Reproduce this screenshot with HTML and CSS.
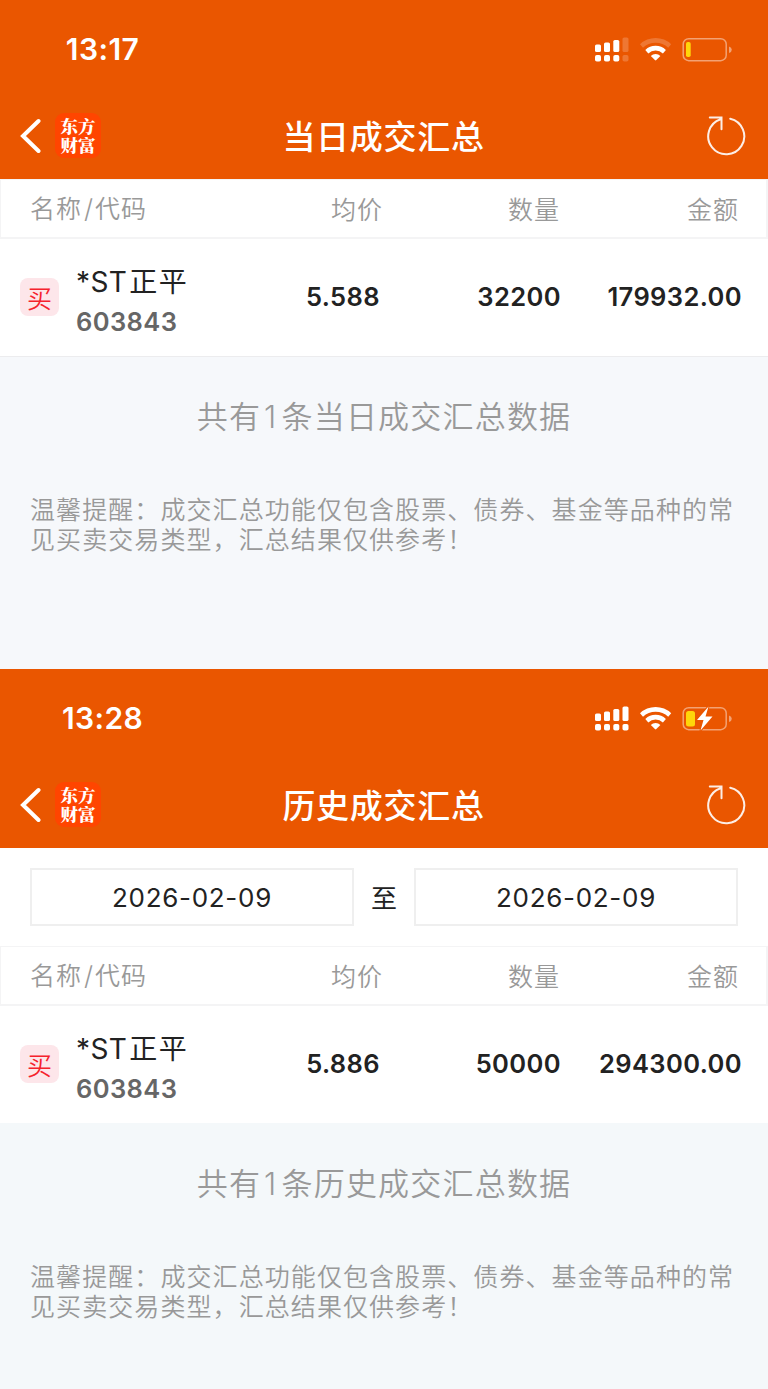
FILE: index.html
```html
<!DOCTYPE html>
<html lang="zh-CN">
<head>
<meta charset="utf-8">
<title>成交汇总</title>
<link rel="stylesheet" href="styles.css">
</head>
<body>
<section class="screen today">
  <header class="header">
    <div class="status">
      <span class="time">13:17</span>
      <svg class="indicators" width="140" height="28" viewBox="0 0 140 28" fill="#fff">
        <rect x="3" y="8.5" width="6" height="7.5" rx="1.6"/><rect x="12" y="6.5" width="6" height="9.5" rx="1.6"/><rect x="21.3" y="4" width="6" height="12" rx="1.6"/><rect x="30.5" y="1.5" width="6" height="14.5" rx="1.6" opacity=".2"/>
        <rect x="3" y="19" width="6" height="6.5" rx="1.8"/><rect x="12" y="19" width="6" height="6.5" rx="1.8"/><rect x="21.3" y="19" width="6" height="6.5" rx="1.8"/><rect x="30.5" y="19" width="6" height="6.5" rx="1.8" opacity=".2"/>
        <path d="M48 8.300l3 3.500a18 18 0 0 1 25.200 0l3-3.500a22.300 22.300 0 0 0-31.200 0z" opacity=".2"/>
        <path d="M53.300 14l3 3.500a10.500 10.500 0 0 1 14.600 0l3-3.500a14.800 14.800 0 0 0-20.600 0z"/>
        <path d="M58.800 20a7 7 0 0 1 9.600 0l-4.100 4.100q-.7.600-1.400 0z"/>
        <rect x="91.200" y="2.700" width="43" height="22" rx="5.500" fill="none" stroke="#fff" stroke-width="1.500" opacity=".45"/>
        <path d="M137 10.500q2.800.8 2.800 3.300t-2.800 3.300z" opacity=".45"/>
        <rect x="94" y="6" width="4.700" height="15" rx="1.800" fill="#ffd60a"/>
      </svg>
    </div>
    <div class="nav">
      <svg class="back" width="22" height="36" viewBox="0 0 22 36"><path d="M19.500 3L4 18 19.500 33" fill="none" stroke="#fff" stroke-width="4" stroke-linecap="round" stroke-linejoin="miter"/></svg>
      <div class="logo"><span>东方</span><span>财富</span></div>
      <h1 class="title">当日成交汇总</h1>
      <svg class="refresh" width="40" height="42" viewBox="0 0 40 42"><path d="M24.200 3.700A18 18 0 1 1 14.500 4.200M3.800 2.500H15.500V14.300" fill="none" stroke="#fff" stroke-width="2" stroke-linecap="round" stroke-opacity=".9"/></svg>
    </div>
  </header>
  <div class="thead"><span>名称<i>/</i>代码</span><span>均价</span><span>数量</span><span>金额</span></div>
  <div class="row">
    <div class="stock"><span class="buy">买</span><div><div class="name"><b>*ST</b>正平</div><div class="code">603843</div></div></div>
    <span class="price">5.588</span><span class="count">32200</span><span class="amount">179932.00</span>
  </div>
  <div class="notes">
    <p class="summary">共有<b>1</b>条当日成交汇总数据</p>
    <p class="tip">温馨提醒：成交汇总功能仅包含股票、债券、基金等品种的常<br>见买卖交易类型，汇总结果仅供参考！</p>
  </div>
</section>
<section class="screen history">
  <header class="header">
    <div class="status">
      <span class="time">13:28</span>
      <svg class="indicators" width="140" height="28" viewBox="0 0 140 28" fill="#fff">
        <rect x="3" y="8.500" width="6" height="7.500" rx="1.600"/><rect x="12" y="6.500" width="6" height="9.500" rx="1.600"/><rect x="21.300" y="4" width="6" height="12" rx="1.600"/><rect x="30.500" y="1.500" width="6" height="14.500" rx="1.600"/>
        <rect x="3" y="19" width="6" height="6.500" rx="1.800"/><rect x="12" y="19" width="6" height="6.500" rx="1.800"/><rect x="21.300" y="19" width="6" height="6.500" rx="1.800"/><rect x="30.500" y="19" width="6" height="6.500" rx="1.800"/>
        <path d="M48 8.300l3 3.500a18 18 0 0 1 25.200 0l3-3.500a22.300 22.300 0 0 0-31.200 0z"/>
        <path d="M53.300 14l3 3.500a10.500 10.500 0 0 1 14.600 0l3-3.500a14.800 14.800 0 0 0-20.600 0z"/>
        <path d="M58.800 20a7 7 0 0 1 9.600 0l-4.100 4.100q-.7.600-1.400 0z"/>
        <rect x="91.200" y="2.700" width="43" height="22" rx="5.500" fill="none" stroke="#fff" stroke-width="1.500" opacity=".45"/>
        <path d="M137 10.500q2.800.8 2.800 3.300t-2.800 3.300z" opacity=".45"/>
        <rect x="94" y="6" width="9" height="15.500" rx="2.500" fill="#ffd60a"/>
        <path d="M116.500 1.500L105 15h6.500l-3 10.500L120.500 11.500h-7z" stroke="#ea5600" stroke-width="2" paint-order="stroke" stroke-linejoin="round"/>
      </svg>
    </div>
    <div class="nav">
      <svg class="back" width="22" height="36" viewBox="0 0 22 36"><path d="M19.500 3L4 18 19.500 33" fill="none" stroke="#fff" stroke-width="4" stroke-linecap="round" stroke-linejoin="miter"/></svg>
      <div class="logo"><span>东方</span><span>财富</span></div>
      <h1 class="title">历史成交汇总</h1>
      <svg class="refresh" width="40" height="42" viewBox="0 0 40 42"><path d="M24.200 3.700A18 18 0 1 1 14.500 4.200M3.800 2.500H15.500V14.300" fill="none" stroke="#fff" stroke-width="2" stroke-linecap="round" stroke-opacity=".9"/></svg>
    </div>
  </header>
  <div class="dates"><span class="date">2026-02-09</span><span class="to">至</span><span class="date">2026-02-09</span></div>
  <div class="thead"><span>名称<i>/</i>代码</span><span>均价</span><span>数量</span><span>金额</span></div>
  <div class="row">
    <div class="stock"><span class="buy">买</span><div><div class="name"><b>*ST</b>正平</div><div class="code">603843</div></div></div>
    <span class="price">5.886</span><span class="count">50000</span><span class="amount">294300.00</span>
  </div>
  <div class="notes">
    <p class="summary">共有<b>1</b>条历史成交汇总数据</p>
    <p class="tip">温馨提醒：成交汇总功能仅包含股票、债券、基金等品种的常<br>见买卖交易类型，汇总结果仅供参考！</p>
  </div>
</section>
</body>
</html>
```
FILE: styles.css
```css
* { box-sizing: border-box; }
body {
  margin: 0;
  width: 768px;
  background: #fff;
  font-family: "Noto Sans CJK SC", sans-serif;
}
.screen { display: flex; flex-direction: column; overflow: hidden; white-space: nowrap; }
.today { height: 669px; background: #f6f8fb; }
.history { height: 720px; background: #f4f8fa; }
.header { height: 179px; flex: none; background: #ea5600; color: #fff; }
.status { height: 92px; padding: 8px 36px 0 0; display: flex; align-items: center; justify-content: space-between; }
.time { width: 205px; padding-bottom: 2px; text-align: center; font: 600 30px/36px Inter, sans-serif; letter-spacing: .4px; }
.nav { height: 87px; padding: 0 22px 0 19px; display: grid; grid-template-columns: 22px 60px 1fr 80px; align-items: center; }
.logo {
  width: 46px; height: 45px; margin-left: 14px; padding-bottom: 2px; border-radius: 9px; background: #ff4500;
  display: flex; flex-direction: column; align-items: center; justify-content: center;
  font: 900 17.5px/19px "Noto Serif CJK SC", "Noto Sans CJK SC", serif;
}
.title { margin: 0; padding-bottom: 1px; text-align: center; font-size: 33px; line-height: 44px; font-weight: 500; letter-spacing: .7px; }
.history .title { padding-bottom: 2px; }
.refresh { justify-self: end; }
.thead {
  height: 60px; flex: none; padding: 0 27px 2px 28px; border: 2px solid #f4f4f5; border-width: 1px 2px 2px 1px; background: #fff; color: #999;
  display: grid; grid-template-columns: 203px 151px 177px 1fr; align-items: center;
  font-size: 25px; line-height: 30px; font-weight: 350; letter-spacing: 1px;
}
.thead span + span { text-align: right; }
.thead span:first-child { padding-left: 1px; }
.thead i { font: 300 26px/28px Inter, sans-serif; margin: 0 1px 0 2px; }
.row {
  height: 117px; flex: none; padding: 0 26px 2px 20px; background: #fff; color: #222;
  display: grid; grid-template-columns: 210px 150px 181px 1fr; align-items: center;
  font: 600 25.5px/32px Inter, sans-serif; letter-spacing: .4px;
}
.row > span { text-align: right; }
.stock { display: flex; align-items: center; gap: 17px; }
.buy {
  width: 39px; height: 38px; border-radius: 8px; background: #fde6ea; color: #f5222d;
  font: 350 25px/39px "Noto Sans CJK SC", sans-serif; text-align: center; letter-spacing: 0;
}
.name { padding-top: 8px; font: 400 28px/40px "Noto Sans CJK SC", sans-serif; letter-spacing: 1.500px; }
.name b { font: 400 28px/40px Inter, sans-serif; margin-right: 2px; letter-spacing: .4px; }
.code { color: #666; line-height: 39px; }
.notes { border-top: 1px solid #ececee; padding: 35px 30px 0; color: #999; font-weight: 350; }
.history .notes { border-color: #f4f8fa; }
.summary { margin: 0; text-align: center; font-size: 31px; line-height: 45px; letter-spacing: 1.200px; }
.summary b { font: 300 31px/45px Inter, sans-serif; margin: 0 4px 0 3px; }
.tip { margin: 54px 0 0; font-size: 25px; line-height: 30px; letter-spacing: 1.080px; }
.dates { height: 98px; flex: none; padding: 0 30px; background: #fff; color: #222; display: flex; align-items: center; }
.date { width: 324px; height: 58px; border: 2px solid #efefef; text-align: center; font: 400 26px/55px Inter, sans-serif; letter-spacing: .7px; }
.to { width: 60px; text-align: center; font-size: 26px; line-height: 40px; }
```
